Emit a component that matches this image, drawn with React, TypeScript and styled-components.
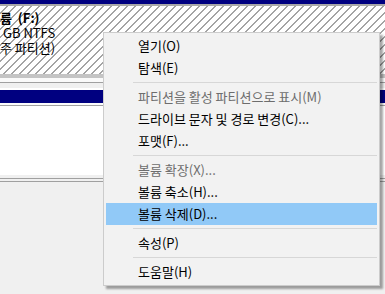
import React from 'react';
import styled, { createGlobalStyle } from 'styled-components';

const GlobalStyle = createGlobalStyle`
  html, body {
    margin: 0;
    padding: 0;
    background: #f0f0f0;
  }
  body {
    font-family: 'Noto Sans CJK KR', 'Noto Sans', sans-serif;
    font-size: 13px;
  }
`;

type Entry =
  | { kind: 'item'; label: string; disabled?: boolean; active?: boolean }
  | { kind: 'sep' };

const MENU: Entry[] = [
  { kind: 'item', label: '열기(O)' },
  { kind: 'item', label: '탐색(E)' },
  { kind: 'sep' },
  { kind: 'item', label: '파티션을 활성 파티션으로 표시(M)', disabled: true },
  { kind: 'item', label: '드라이브 문자 및 경로 변경(C)...' },
  { kind: 'item', label: '포맷(F)...' },
  { kind: 'sep' },
  { kind: 'item', label: '볼륨 확장(X)...', disabled: true },
  { kind: 'item', label: '볼륨 축소(H)...' },
  { kind: 'item', label: '볼륨 삭제(D)...', active: true },
  { kind: 'sep' },
  { kind: 'item', label: '속성(P)' },
  { kind: 'sep' },
  { kind: 'item', label: '도움말(H)' },
];

const App = () => {
  return (
    <>
      <GlobalStyle />
      <Screen>
        <Partition>
          <PartitionHeader />
          <PartitionBody>
            <VolumeName>륨&nbsp;&nbsp;(F:)</VolumeName>
            <VolumeLine $indent={3}>GB NTFS</VolumeLine>
            <VolumeLine>주 파티션)</VolumeLine>
          </PartitionBody>
        </Partition>

        <Band $h={4} $bg="#c4c4c4" />
        <Band $h={4} $bg="#fafafa" />
        <Rule />
        <Band $h={5} $bg="#f0f0f0" />
        <Band $h={2} $bg="#ffffff" />
        <NavyBar />
        <Band $h={2} $bg="#fbfbfb" />
        <Rule />
        <WhitePane />
        <Band $h={3} $bg="#f0f0f0" />
        <Rule />
        <Band $h={2} $bg="#f0f0f0" />
        <Rule />

        <Menu>
          {MENU.map((entry, i) =>
            entry.kind === 'sep' ? (
              <Separator key={i} />
            ) : (
              <Item key={i} $disabled={entry.disabled} $active={entry.active}>
                {entry.label}
              </Item>
            )
          )}
        </Menu>
      </Screen>
    </>
  );
};

export default App;

const Screen = styled.div`
  position: relative;
  width: 385px;
  height: 294px;
  overflow: hidden;
  background: #f0f0f0;
  display: flex;
  flex-direction: column;
`;

const Partition = styled.div`
  display: flex;
  flex-direction: column;
`;

const PartitionHeader = styled.div`
  height: 4px;
  background: #000080;
  border-bottom: 2px solid #a8a8a8;
`;

const PartitionBody = styled.div`
  height: 64px;
  padding-top: 4px;
  background-color: #ffffff;
  background-image: repeating-linear-gradient(
    135deg,
    #ffffff 0px,
    #ffffff 4.6px,
    #a4a4a4 4.6px,
    #a4a4a4 5.66px
  );
  color: #000;
  line-height: 15px;
  white-space: nowrap;
`;

const VolumeName = styled.div`
  font-weight: bold;
  height: 15px;
`;

const VolumeLine = styled.div<{ $indent?: number }>`
  padding-left: ${({ $indent }) => $indent || 0}px;
  height: 15px;
`;

const Band = styled.div<{ $h: number; $bg: string }>`
  height: ${({ $h }) => $h}px;
  background: ${({ $bg }) => $bg};
  flex-shrink: 0;
`;

const Rule = styled.div`
  height: 1px;
  background: #a0a0a0;
  flex-shrink: 0;
`;

const NavyBar = styled.div`
  height: 13px;
  background: #000080;
  flex-shrink: 0;
`;

const WhitePane = styled.div`
  height: 69px;
  background: #ffffff;
  flex-shrink: 0;
`;

const Menu = styled.div`
  position: absolute;
  left: 103px;
  top: 32px;
  width: 271px;
  padding: 2px;
  border: 1px solid #cccccc;
  background: #f2f2f2;
  box-shadow: 3px 3px 2px rgba(0, 0, 0, 0.35);
  display: flex;
  flex-direction: column;
`;

const Item = styled.div<{ $disabled?: boolean; $active?: boolean }>`
  height: 22px;
  line-height: 22px;
  padding-left: 32px;
  color: ${({ $disabled }) => ($disabled ? '#6d6d6d' : '#000000')};
  background: ${({ $active }) => ($active ? '#91c9f7' : 'transparent')};
  white-space: nowrap;
`;

const Separator = styled.div`
  height: 7px;
  margin-left: 27px;
  display: flex;
  align-items: center;

  &::after {
    content: '';
    flex: 1;
    height: 1px;
    background: #d7d7d7;
  }
`;
